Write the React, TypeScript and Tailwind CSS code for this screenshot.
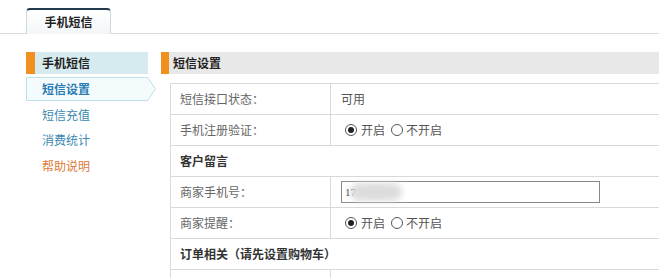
const font = { fontFamily: '"Noto Sans CJK SC", "Liberation Sans", sans-serif' };

const Radio = ({ checked }: { checked?: boolean }) => (
  <span className="inline-flex h-[12px] w-[12px] items-center justify-center rounded-full border border-[#555] bg-white">
    {checked && <span className="h-[6px] w-[6px] rounded-full bg-[#222]" />}
  </span>
);

const RadioPair = () => (
  <div className="flex items-center text-[12px] text-[#555]">
    <Radio checked />
    <span className="ml-[4px]">开启</span>
    <span className="ml-[6px] flex items-center">
      <Radio />
    </span>
    <span className="ml-[3px]">不开启</span>
  </div>
);

const Row = ({ label, children }: { label: string; children?: React.ReactNode }) => (
  <div className="flex h-[31px] border-b border-[#d9d9d9]">
    <div className="flex w-[160px] shrink-0 items-center border-r border-[#d9d9d9] pl-[9px] text-[12px] text-[#666]">
      {label}
    </div>
    <div className="flex flex-1 items-center pl-[10px]">{children}</div>
  </div>
);

const Section = ({ title }: { title: string }) => (
  <div className="flex h-[31px] items-center border-b border-[#d9d9d9] pl-[9px] text-[12px] font-bold text-[#333]">
    {title}
  </div>
);

const Input = ({ value, blur }: { value?: string; blur?: boolean }) => (
  <div className="relative flex h-[22px] w-[259px] items-center border border-[#8a8a8a] bg-white pl-[3px] text-[11px] text-[#333]">
    <span style={{ fontFamily: '"Liberation Serif", serif' }}>{value}</span>
    {blur && (
      <span className="absolute left-[8px] top-[1px] h-[18px] w-[52px] rounded-full bg-[#dcdcdc] blur-[3px]" />
    )}
  </div>
);

export default function App() {
  return (
    <div className="h-[278px] w-[659px] overflow-hidden bg-white" style={font}>
      {/* tabs */}
      <div className="flex pt-[8px]">
        <div className="w-[26px] border-b border-[#d5dde2]" />
        <div className="flex h-[26px] w-[85px] items-center justify-center rounded-t-[4px] border-x border-t-2 border-x-[#cfd8dd] border-t-[#1f3b4d] bg-gradient-to-b from-[#ffffff] to-[#f2f6f8] text-[12px] font-bold text-[#222]">
          手机短信
        </div>
        <div className="flex-1 border-b border-[#d5dde2]" />
      </div>

      <div className="mt-[18px] flex pl-[26px]">
        {/* sidebar */}
        <div className="w-[135px] shrink-0">
          <div className="flex h-[22px] w-[122px] items-center border-l-[9px] border-[#f0901e] bg-[#d6ebef] pl-[7px] text-[12px] font-bold text-[#222]">
            手机短信
          </div>
          <div className="relative mt-[3px] flex h-[24px] w-[130px] items-center pl-[16px] text-[12px] font-bold text-[#2a7cb4]">
            <svg className="absolute inset-0" width="130" height="24" viewBox="0 0 130 24">
              <polygon points="0.5,0.5 121.5,0.5 129.5,12 121.5,23.5 0.5,23.5" fill="#f4fbfd" stroke="#bcdfe8" />
            </svg>
            <span className="relative">短信设置</span>
          </div>
          <div className="mt-[1px] flex flex-col pl-[16px] text-[12px]">
            <span className="flex h-[25px] items-center text-[#3a89ae]">短信充值</span>
            <span className="flex h-[26px] items-center text-[#3a89ae]">消费统计</span>
            <span className="flex h-[25px] items-center text-[#e07a35]">帮助说明</span>
          </div>
        </div>

        {/* main */}
        <div className="flex-1">
          <div className="flex h-[22px] items-center border-l-[8px] border-[#f0901e] bg-[#e8e8e8] pl-[4px] text-[12px] font-bold text-[#222]">
            短信设置
          </div>
          <div className="ml-[9px] mt-[9px] border-l border-t border-[#d9d9d9]">
            <Row label="短信接口状态：">
              <span className="text-[12px] text-[#555]">可用</span>
            </Row>
            <Row label="手机注册验证：">
              <span className="pl-[4px]">
                <RadioPair />
              </span>
            </Row>
            <Section title="客户留言" />
            <Row label="商家手机号：">
              <Input value="17" blur />
            </Row>
            <Row label="商家提醒：">
              <span className="pl-[4px]">
                <RadioPair />
              </span>
            </Row>
            <Section title="订单相关（请先设置购物车）" />
            <Row label="">
              <div className="mt-[10px]">
                <Input />
              </div>
            </Row>
          </div>
        </div>
      </div>
    </div>
  );
}
